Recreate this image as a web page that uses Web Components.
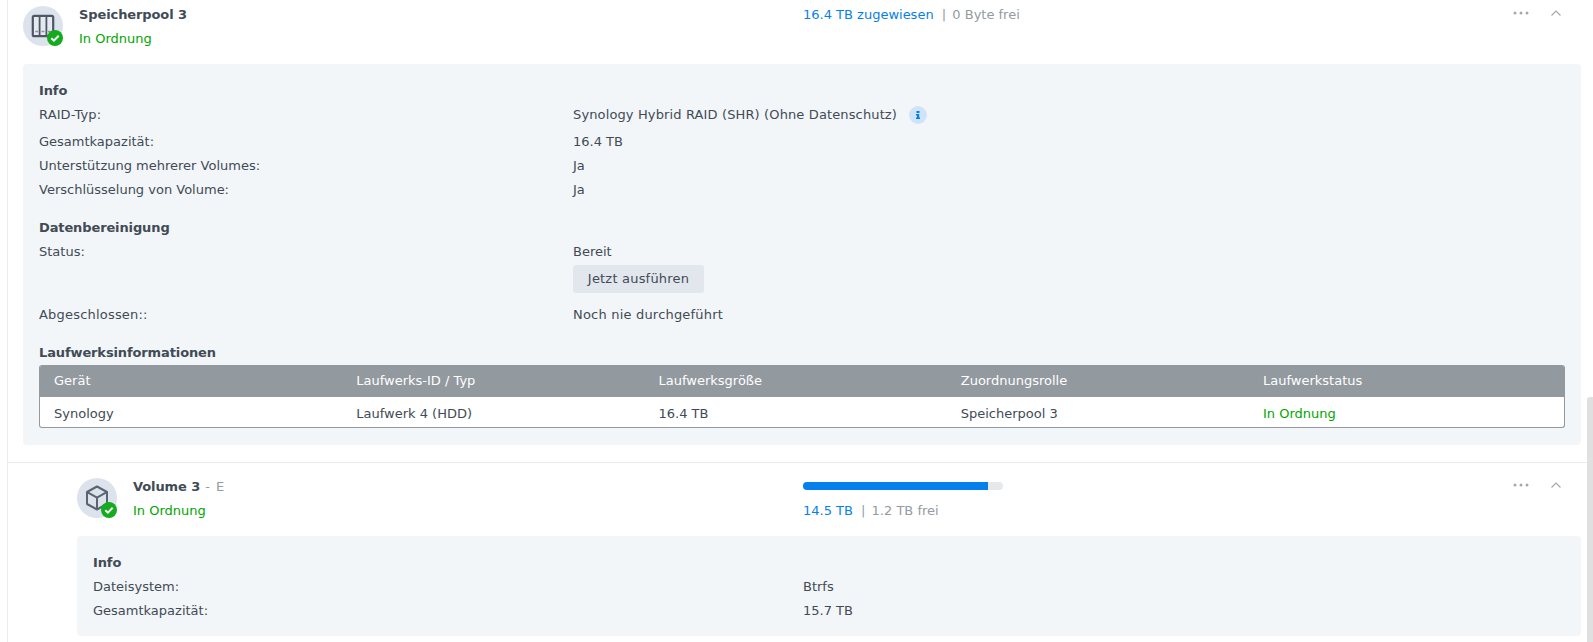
<!DOCTYPE html>
<html lang="de">
<head>
<meta charset="utf-8">
<title>Speicher-Manager</title>
<style>
html, body { margin: 0; height: 642px; overflow: hidden; background: #fff; }
body { font: 13px/16px "DejaVu Sans", sans-serif; color: #414b55; }
</style>
</head>
<body>
<storage-page>
  <storage-item name="Speicherpool 3" icon="pool" indent="23" used="16.4 TB zugewiesen" free="0 Byte frei">
    <info-panel>
      <info-heading>Info</info-heading>
      <info-row label="RAID-Typ:" width="534" first>Synology Hybrid RAID (SHR) (Ohne Datenschutz)<info-badge></info-badge></info-row>
      <info-row label="Gesamtkapazität:" width="534">16.4 TB</info-row>
      <info-row label="Unterstützung mehrerer Volumes:" width="534">Ja</info-row>
      <info-row label="Verschlüsselung von Volume:" width="534">Ja</info-row>
      <info-heading section style="margin-bottom: 4px">Datenbereinigung</info-heading>
      <info-row label="Status:" width="534">Bereit</info-row>
      <info-row width="534"><flat-button>Jetzt ausführen</flat-button></info-row>
      <info-row label="Abgeschlossen::" width="534" style="letter-spacing: 0.2px">Noch nie durchgeführt</info-row>
      <info-heading section>Laufwerksinformationen</info-heading>
      <drive-table>
        <drive-cell slot="head">Gerät</drive-cell>
        <drive-cell slot="head">Laufwerks-ID / Typ</drive-cell>
        <drive-cell slot="head">Laufwerksgröße</drive-cell>
        <drive-cell slot="head">Zuordnungsrolle</drive-cell>
        <drive-cell slot="head">Laufwerkstatus</drive-cell>
        <drive-cell>Synology</drive-cell>
        <drive-cell>Laufwerk 4 (HDD)</drive-cell>
        <drive-cell>16.4 TB</drive-cell>
        <drive-cell>Speicherpool 3</drive-cell>
        <drive-cell ok>In Ordnung</drive-cell>
      </drive-table>
    </info-panel>
  </storage-item>
  <storage-item name="Volume 3" tag="E" icon="volume" indent="77" used="14.5 TB" free="1.2 TB frei" percent="92.5" divided>
    <info-panel compact>
      <info-heading style="margin-bottom: 4px">Info</info-heading>
      <info-row label="Dateisystem:" width="710">Btrfs</info-row>
      <info-row label="Gesamtkapazität:" width="710">15.7 TB</info-row>
    </info-panel>
  </storage-item>
</storage-page>

<script>
const icons = {
  pool: `<rect x="9.8" y="9.8" width="20.4" height="20.4" rx="1.5" fill="#e6eaf0" stroke="#4d5765" stroke-width="2.2"/>
    <path d="M16.6 10v20M23.4 10v20" stroke="#4d5765" stroke-width="1.8"/>
    <path d="M12.3 25.5h2.8M18.6 25.5h2.8M25 25.5h2.8" stroke="#8a929c" stroke-width="1.4"/>`,
  volume: `<path d="M20 8.5L30 14v12l-10 5.5L10 26V14z M10.3 14.2L20 19.6l9.7-5.4M20 19.6V31" fill="none" stroke="#5a6472" stroke-width="2" stroke-linejoin="round"/>`
};

class StoragePage extends HTMLElement {
  constructor() {
    super();
    this.attachShadow({ mode: "open" });
    this.shadowRoot.innerHTML = `
    <style>
:host { display: block; position: relative; height: 642px; overflow: hidden; }
.rail { position: absolute; left: 7px; top: 0; width: 1px; height: 642px; background: #ececf0; }
.scroll { position: absolute; right: 0; top: 397px; width: 6px; height: 245px; background: #e0e0e0; border-radius: 3px 0 0 0; }
    </style>
    <div class="rail"></div>
    <slot></slot>
    <div class="scroll"></div>
    `;
  }
}

class StorageItem extends HTMLElement {
  constructor() {
    super();
    this.attachShadow({ mode: "open" });
  }

  connectedCallback() {
    const indent = parseInt(this.getAttribute("indent"), 10);
    const percent = this.getAttribute("percent");
    const tag = this.getAttribute("tag");
    this.shadowRoot.innerHTML = `
    <style>
:host { display: block; margin-left: 8px; padding: 6px 12px 0 ${indent - 8}px; }
:host([divided]) { border-top: 1px solid #e9ebef; padding-top: 15px; margin-top: 17px; }
.head { display: flex; height: 40px; margin-bottom: 18px; }
.avatar { position: relative; flex: none; width: 40px; height: 40px; border-radius: 50%; background: #dce3ec; }
.avatar svg.main { display: block; width: 40px; height: 40px; }
.avatar svg.ok { position: absolute; right: 0; bottom: 0; width: 16px; height: 16px; }
.name { width: ${803 - indent - 40}px; flex: none; padding-left: 16px; box-sizing: border-box; }
.title { font-weight: bold; line-height: 18px; letter-spacing: -0.1px; }
.title span { font-weight: normal; color: #949ba1; letter-spacing: 1px; }
.state { color: #00a600; margin-top: 7px; line-height: 16px; }
.usage { flex: 1; padding-top: 1px; }
.bar { width: 200px; height: 8px; border-radius: 4px; background: #e6e8ea; overflow: hidden; margin: 3px 0 13px; }
.bar div { height: 100%; background: #057feb; }
.numbers { line-height: 16px; color: #949ba1; }
.numbers b { font-weight: normal; color: #057feb; }
.numbers i { font-style: normal; margin: 0 2px 0 4px; }
.tools { display: flex; width: 48px; height: 14px; align-items: center; justify-content: space-between; flex: none; padding-right: 20px; }
    </style>
    <div class="head">
      <div class="avatar">
        <svg class="main" viewBox="0 0 40 40">${icons[this.getAttribute("icon")]}</svg>
        <svg class="ok" viewBox="0 0 16 16"><circle cx="8" cy="8" r="8" fill="#14ab1e"/><path d="M4.3 8.2l2.6 2.5 4.8-5" fill="none" stroke="#fff" stroke-width="2"/></svg>
      </div>
      <div class="name">
        <div class="title">${this.getAttribute("name")}${tag ? `<span> - ${tag}</span>` : ""}</div>
        <div class="state">In Ordnung</div>
      </div>
      <div class="usage">
        ${percent ? `<div class="bar"><div style="width:${percent}%"></div></div>` : ""}
        <div class="numbers"><b>${this.getAttribute("used")}</b> <i>|</i> ${this.getAttribute("free")}</div>
      </div>
      <div class="tools">
        <svg width="16" height="4" viewBox="0 0 16 4"><g fill="#a3a9b0"><circle cx="2" cy="2" r="1.5"/><circle cx="8" cy="2" r="1.5"/><circle cx="14" cy="2" r="1.5"/></g></svg>
        <svg width="10" height="6" viewBox="0 0 10 6"><path d="M.5 5.5L5 1l4.5 4.5" fill="none" stroke="#a3a9b0" stroke-width="1.2"/></svg>
      </div>
    </div>
    <slot></slot>
    `;
  }
}

class InfoPanel extends HTMLElement {
  constructor() {
    super();
    this.attachShadow({ mode: "open" });
    this.shadowRoot.innerHTML = `
    <style>
:host { display: block; background: #f3f6f9; border-radius: 4px; padding: 17px 16px; }
:host([compact]) { padding-bottom: 13px; }
    </style>
    <slot></slot>
    `;
  }
}

class InfoHeading extends HTMLElement {
  constructor() {
    super();
    this.attachShadow({ mode: "open" });
    this.shadowRoot.innerHTML = `
    <style>
:host { display: block; font-weight: bold; line-height: 20px; height: 18px; margin-bottom: 3px; letter-spacing: -0.12px; }
:host([section]) { margin-top: 16px; }
    </style>
    <slot></slot>
    `;
  }
}

class InfoRow extends HTMLElement {
  constructor() {
    super();
    this.attachShadow({ mode: "open" });
  }

  connectedCallback() {
    this.shadowRoot.innerHTML = `
    <style>
:host { display: flex; min-height: 24px; align-items: center; }
:host([first]) { min-height: 26px; padding-bottom: 2px; letter-spacing: 0.13px; }
.label { flex: none; width: ${this.getAttribute("width")}px; }
.value { flex: 1; display: flex; align-items: center; }
    </style>
    <div class="label">${this.getAttribute("label") || ""}</div>
    <div class="value"><slot></slot></div>
    `;
  }
}

class InfoBadge extends HTMLElement {
  constructor() {
    super();
    this.attachShadow({ mode: "open" });
    this.shadowRoot.innerHTML = `
    <style>
:host { display: inline-block; width: 18px; height: 18px; margin-left: 12px; border-radius: 50%; background: #cfe4f9; }
svg { display: block; }
    </style>
    <svg width="18" height="18" viewBox="0 0 18 18"><path d="M7.5 5h3v2h-3zM7 8h3.2v3.5H11V13H7v-1.5h1V9.5H7z" fill="#057feb"/></svg>
    `;
  }
}

class FlatButton extends HTMLElement {
  constructor() {
    super();
    this.attachShadow({ mode: "open" });
    this.shadowRoot.innerHTML = `
    <style>
:host { display: inline-block; box-sizing: border-box; width: 131px; height: 28px; line-height: 28px; text-align: center; letter-spacing: 0.2px; border-radius: 3px; background: #e2e7ee; margin: 1px 0 10px; }
    </style>
    <slot></slot>
    `;
  }
}

class DriveTable extends HTMLElement {
  constructor() {
    super();
    this.attachShadow({ mode: "open" });
    this.shadowRoot.innerHTML = `
    <style>
:host { display: block; margin-top: 4px; border-radius: 3px; overflow: hidden; border: 1px solid #92999f; border-top: 0; background: #fff; }
.grid { display: grid; grid-template-columns: repeat(4, 302.25px) 1fr; padding-left: 14px; }
.head { background: #92999f; color: #fff; height: 32px; align-items: center; }
.body { box-sizing: border-box; height: 30px; padding-top: 4px; align-items: center; }
    </style>
    <div class="grid head"><slot name="head"></slot></div>
    <div class="grid body"><slot></slot></div>
    `;
  }
}

class DriveCell extends HTMLElement {
  constructor() {
    super();
    this.attachShadow({ mode: "open" });
    this.shadowRoot.innerHTML = `
    <style>
:host { display: block; }
:host([ok]) { color: #00a600; }
    </style>
    <slot></slot>
    `;
  }
}

const elements = {
  "storage-page": StoragePage,
  "storage-item": StorageItem,
  "info-panel": InfoPanel,
  "info-heading": InfoHeading,
  "info-row": InfoRow,
  "info-badge": InfoBadge,
  "flat-button": FlatButton,
  "drive-table": DriveTable,
  "drive-cell": DriveCell
};
for (const name in elements) {
  if (!customElements.get(name)) {
    customElements.define(name, elements[name]);
  }
}
</script>
</body>
</html>
